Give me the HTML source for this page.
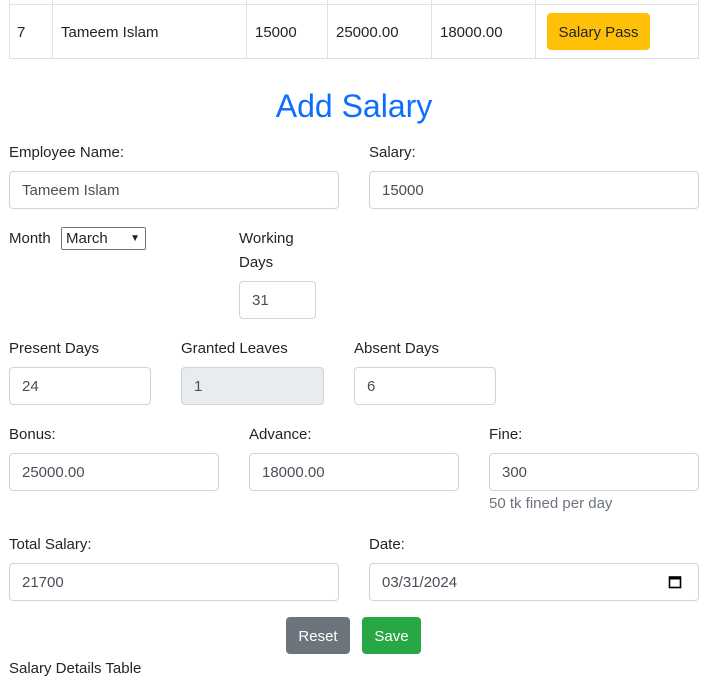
<!DOCTYPE html>
<html><head><style>
body{margin:0;width:713px;height:694px;overflow:hidden;background:#fff;font-family:"Liberation Sans",sans-serif;font-size:15px;color:#212529;position:relative}
.a{position:absolute}
.l{position:absolute;line-height:22px}
.i{position:absolute;box-sizing:border-box;height:38px;border:1px solid #ced4da;border-radius:4px;padding-left:12px;line-height:38px;color:#495057;background:#fff}
.v{position:absolute;top:0;width:1px;height:59px;background:#dee2e6}
.b{position:absolute;height:37px;line-height:39px;border-radius:4px;color:#fff;text-align:center}
</style></head><body>
<div class="a" style="left:9px;top:4px;width:689px;height:55px;border-top:1px solid #dee2e6;border-bottom:1px solid #dee2e6;box-sizing:border-box"></div>
<div class="v" style="left:9px"></div><div class="v" style="left:52px"></div><div class="v" style="left:246px"></div><div class="v" style="left:327px"></div><div class="v" style="left:431px"></div><div class="v" style="left:535px"></div><div class="v" style="left:698px"></div>
<div class="l" style="left:17px;top:22px">7</div>
<div class="l" style="left:61px;top:22px">Tameem Islam</div>
<div class="l" style="left:255px;top:22px">15000</div>
<div class="l" style="left:336px;top:22px">25000.00</div>
<div class="l" style="left:440px;top:22px">18000.00</div>
<div class="b" style="left:547px;top:13px;width:103px;background:#ffc107;color:#212529">Salary Pass</div>
<div class="a" style="left:0;width:708px;top:85px;text-align:center;font-size:32px;line-height:42px;color:#0d6efd">Add Salary</div>
<div class="l" style="left:9px;top:142px">Employee Name:</div>
<div class="l" style="left:369px;top:142px">Salary:</div>
<div class="i" style="left:9px;top:171px;width:330px">Tameem Islam</div>
<div class="i" style="left:369px;top:171px;width:330px">15000</div>
<div class="l" style="left:9px;top:228px">Month</div>
<div class="a" style="left:61px;top:227px;width:85px;height:23px;box-sizing:border-box;border:1px solid #767676;border-radius:2px;padding-left:4px;line-height:22px">March<span style="position:absolute;right:5px;top:0;font-size:10px">&#9660;</span></div>
<div class="l" style="left:239px;top:227px;line-height:24px">Working<br>Days</div>
<div class="i" style="left:239px;top:281px;width:77px">31</div>
<div class="l" style="left:9px;top:338px">Present Days</div>
<div class="l" style="left:181px;top:338px">Granted Leaves</div>
<div class="l" style="left:354px;top:338px">Absent Days</div>
<div class="i" style="left:9px;top:367px;width:142px">24</div>
<div class="i" style="left:181px;top:367px;width:143px;background:#e9ecef">1</div>
<div class="i" style="left:354px;top:367px;width:142px">6</div>
<div class="l" style="left:9px;top:424px">Bonus:</div>
<div class="l" style="left:249px;top:424px">Advance:</div>
<div class="l" style="left:489px;top:424px">Fine:</div>
<div class="i" style="left:9px;top:453px;width:210px">25000.00</div>
<div class="i" style="left:249px;top:453px;width:210px">18000.00</div>
<div class="i" style="left:489px;top:453px;width:210px">300</div>
<div class="l" style="left:489px;top:493px;color:#6c757d">50 tk fined per day</div>
<div class="l" style="left:9px;top:534px">Total Salary:</div>
<div class="l" style="left:369px;top:534px">Date:</div>
<div class="i" style="left:9px;top:563px;width:330px">21700</div>
<div class="i" style="left:369px;top:563px;width:330px">03/31/2024
<svg class="a" style="left:298px;top:11px" width="14" height="14" viewBox="0 0 14 14"><rect x="1.5" y="2" width="11" height="10.5" fill="none" stroke="#000" stroke-width="1.6"/><rect x="1.5" y="2" width="11" height="2.5" fill="#000"/></svg></div>
<div class="b" style="left:286px;top:617px;width:64px;background:#6c757d">Reset</div>
<div class="b" style="left:362px;top:617px;width:59px;background:#28a745">Save</div>
<div class="l" style="left:9px;top:658px">Salary Details Table</div>
</body></html>
